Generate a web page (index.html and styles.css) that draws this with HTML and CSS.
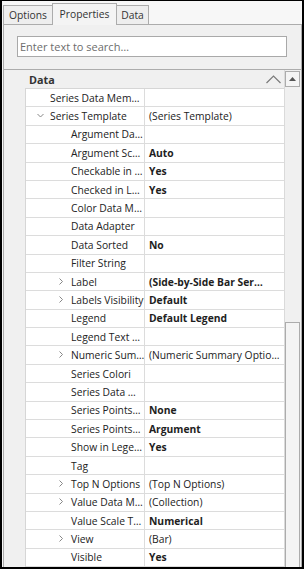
FILE: index.html
```html
<!DOCTYPE html>
<html>
<head>
<meta charset="utf-8">
<link rel="stylesheet" href="styles.css">
</head>
<body>
<div class="window">
  <div class="tabs">
    <div class="tab t-options">Options</div>
    <div class="tab t-props active">Properties</div>
    <div class="tab t-data">Data</div>
  </div>
  <div class="panel">
    <div class="search">Enter text to search…</div>
    <div class="grid">
      <div class="grid-main">
        <div class="cat">
          <span class="cat-title">Data</span>
          <svg class="cat-chev" width="15" height="9" viewBox="0 0 15 9"><path d="M0.5 8 L7.5 1 L14.5 8" fill="none" stroke="#7a7a7a" stroke-width="1.2"/></svg>
        </div>
        <div class="rows">
          <div class="table">
            <div class="row"><div class="name l1"><span class="slot"></span>Series Data Mem…</div><div class="val"></div></div>
            <div class="row"><div class="name l1"><span class="slot"><svg width="8" height="6" viewBox="0 0 8 6"><path d="M0.5 1 L3.5 4 L6.5 1" fill="none" stroke="#888" stroke-width="1"/></svg></span>Series Template</div><div class="val">(Series Template)</div></div>
            <div class="row"><div class="name l2"><span class="slot"></span>Argument Da…</div><div class="val"></div></div>
            <div class="row"><div class="name l2"><span class="slot"></span>Argument Sc…</div><div class="val b">Auto</div></div>
            <div class="row"><div class="name l2"><span class="slot"></span>Checkable in …</div><div class="val b">Yes</div></div>
            <div class="row"><div class="name l2"><span class="slot"></span>Checked in L…</div><div class="val b">Yes</div></div>
            <div class="row"><div class="name l2"><span class="slot"></span>Color Data M…</div><div class="val"></div></div>
            <div class="row"><div class="name l2"><span class="slot"></span>Data Adapter</div><div class="val"></div></div>
            <div class="row"><div class="name l2"><span class="slot"></span>Data Sorted</div><div class="val b">No</div></div>
            <div class="row"><div class="name l2"><span class="slot"></span>Filter String</div><div class="val"></div></div>
            <div class="row"><div class="name l2"><span class="slot"><svg width="6" height="8" viewBox="0 0 6 8"><path d="M1.5 0.5 L4.5 3.5 L1.5 6.5" fill="none" stroke="#888" stroke-width="1"/></svg></span>Label</div><div class="val b">(Side-by-Side Bar Ser…</div></div>
            <div class="row"><div class="name l2"><span class="slot"><svg width="6" height="8" viewBox="0 0 6 8"><path d="M1.5 0.5 L4.5 3.5 L1.5 6.5" fill="none" stroke="#888" stroke-width="1"/></svg></span>Labels Visibility</div><div class="val b">Default</div></div>
            <div class="row"><div class="name l2"><span class="slot"></span>Legend</div><div class="val b">Default Legend</div></div>
            <div class="row"><div class="name l2"><span class="slot"></span>Legend Text …</div><div class="val"></div></div>
            <div class="row"><div class="name l2"><span class="slot"><svg width="6" height="8" viewBox="0 0 6 8"><path d="M1.5 0.5 L4.5 3.5 L1.5 6.5" fill="none" stroke="#888" stroke-width="1"/></svg></span>Numeric Sum…</div><div class="val">(Numeric Summary Optio…</div></div>
            <div class="row"><div class="name l2"><span class="slot"></span>Series Colori</div><div class="val"></div></div>
            <div class="row"><div class="name l2"><span class="slot"></span>Series Data …</div><div class="val"></div></div>
            <div class="row"><div class="name l2"><span class="slot"></span>Series Points…</div><div class="val b">None</div></div>
            <div class="row"><div class="name l2"><span class="slot"></span>Series Points…</div><div class="val b">Argument</div></div>
            <div class="row"><div class="name l2"><span class="slot"></span>Show in Lege…</div><div class="val b">Yes</div></div>
            <div class="row"><div class="name l2"><span class="slot"></span>Tag</div><div class="val"></div></div>
            <div class="row"><div class="name l2"><span class="slot"><svg width="6" height="8" viewBox="0 0 6 8"><path d="M1.5 0.5 L4.5 3.5 L1.5 6.5" fill="none" stroke="#888" stroke-width="1"/></svg></span>Top N Options</div><div class="val">(Top N Options)</div></div>
            <div class="row"><div class="name l2"><span class="slot"><svg width="6" height="8" viewBox="0 0 6 8"><path d="M1.5 0.5 L4.5 3.5 L1.5 6.5" fill="none" stroke="#888" stroke-width="1"/></svg></span>Value Data M…</div><div class="val">(Collection)</div></div>
            <div class="row"><div class="name l2"><span class="slot"></span>Value Scale T…</div><div class="val b">Numerical</div></div>
            <div class="row"><div class="name l2"><span class="slot"><svg width="6" height="8" viewBox="0 0 6 8"><path d="M1.5 0.5 L4.5 3.5 L1.5 6.5" fill="none" stroke="#888" stroke-width="1"/></svg></span>View</div><div class="val">(Bar)</div></div>
            <div class="row"><div class="name l2"><span class="slot"></span>Visible</div><div class="val b">Yes</div></div>
          </div>
        </div>
      </div>
      <div class="vscroll">
        <div class="sbtn"><svg width="7" height="4" viewBox="0 0 7 4"><path d="M0 4 L3.5 0 L7 4 Z" fill="#555"/></svg></div>
        <div class="track"><div class="thumb"></div></div>
      </div>
    </div>
  </div>
</div>
</body>
</html>
```
FILE: styles.css
```css
html, body {
  margin: 0;
  padding: 0;
  background: #ffffff;
}
body {
  font-family: "Open Sans", "Noto Sans", sans-serif;
  font-size: 10.3px;
  color: #222222;
}
.window {
  box-sizing: border-box;
  width: 304px;
  height: 569px;
  border-top: 1px solid #000;
  border-left: 2px solid #000;
  border-right: 2px solid #000;
  border-bottom: 2px solid #000;
  background: #f7f7f7;
  overflow: hidden;
  display: flex;
  flex-direction: column;
}
.tabs {
  height: 23px;
  display: flex;
  align-items: flex-end;
  padding-left: 1px;
  flex: none;
}
.tab {
  box-sizing: border-box;
  height: 19px;
  border: 1px solid #acacac;
  border-bottom: none;
  background: #eeeeee;
  display: flex;
  align-items: center;
  justify-content: center;
  color: #333;
  font-size: 10.3px;
}
.t-options { width: 50px; }
.t-props { width: 65px; margin-left: -1px; }
.t-data { width: 33px; margin-left: -1px; }
.tab.active {
  height: 22px;
  margin-bottom: -1px;
  background: #f4f4f4;
  position: relative;
  z-index: 2;
  padding-bottom: 2px;
}
.panel {
  flex: 1;
  margin-left: 1px;
  width: 299px;
  box-sizing: border-box;
  border: 1px solid #acacac;
  border-bottom: none;
  background: #f0f0f0;
  display: flex;
  flex-direction: column;
  min-height: 0;
}
.search {
  box-sizing: border-box;
  margin: 11px 14px 0 13px;
  height: 21px;
  border: 1px solid #a9a9a9;
  background: #fff;
  color: #6d6d6d;
  font-size: 11px;
  padding-left: 2px;
  line-height: 19px;
  flex: none;
}
.grid {
  margin-top: 12px;
  border-top: 1px solid #acacac;
  flex: 1;
  display: flex;
  min-height: 0;
}
.grid-main {
  width: 280px;
  flex: none;
  display: flex;
  flex-direction: column;
}
.cat {
  height: 18px;
  display: flex;
  align-items: center;
  padding-left: 25px;
  position: relative;
  flex: none;
}
.cat-title {
  font-weight: bold;
  color: #333;
  font-size: 10.8px;
}
.cat-chev {
  margin-left: auto;
  margin-right: 3px;
  margin-top: 1px;
}
.rows {
  padding-left: 21px;
  flex: 1;
}
.table {
  background: #fff;
  border-top: 1px solid #d6d6d6;
  border-left: 1px solid #d6d6d6;
}
.row {
  box-sizing: border-box;
  height: 18.4px;
  border-bottom: 1px solid #dcdcdc;
  display: grid;
  grid-template-columns: 119px 1fr;
}
.name, .val {
  display: flex;
  align-items: center;
  white-space: nowrap;
  overflow: hidden;
}
.name {
  box-sizing: border-box;
  border-right: 1px solid #dcdcdc;
}
.name.l1 { padding-left: 9px; }
.name.l2 { padding-left: 30px; }
.slot {
  width: 15px;
  flex: none;
  display: flex;
  align-items: center;
  padding-left: 2px;
  box-sizing: border-box;
}
.slot svg { display: block; }
.val {
  padding-left: 4px;
  color: #222;
}
.val.b {
  font-weight: bold;
  color: #1e1e1e;
}
.vscroll {
  width: 17px;
  box-sizing: border-box;
  border-left: 1px solid #dadada;
  background: #f0f0f0;
  display: flex;
  flex-direction: column;
  padding-top: 1px;
}
.sbtn {
  box-sizing: border-box;
  width: 15px;
  height: 16px;
  border: 1px solid #acacac;
  background: #f4f4f4;
  display: flex;
  align-items: center;
  justify-content: center;
}
.track {
  flex: 1;
  position: relative;
}
.thumb {
  position: absolute;
  left: 0;
  top: 235px;
  width: 15px;
  height: 400px;
  box-sizing: border-box;
  border: 1px solid #acacac;
  background: #f4f4f4;
}
```
